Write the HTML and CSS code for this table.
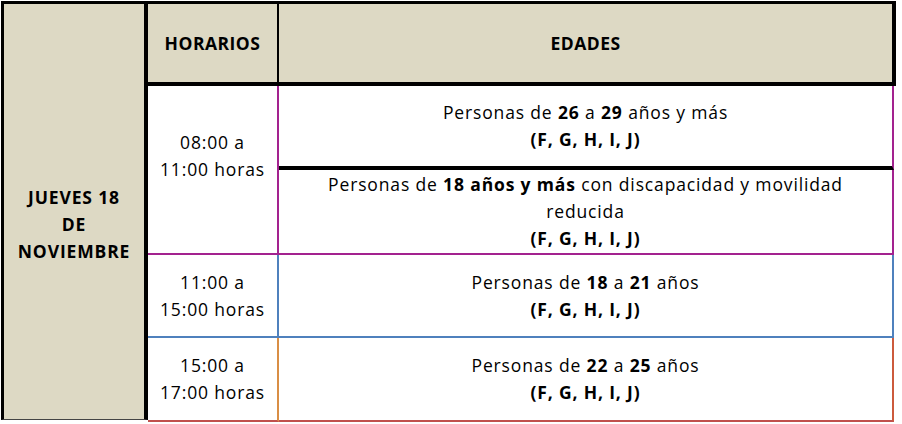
FILE: index.html
```html
<!DOCTYPE html>
<html lang="es">
<head>
<meta charset="utf-8">
<title>Horarios</title>
<link rel="stylesheet" href="styles.css">
</head>
<body>
<div class="sheet">
  <div class="day"><div class="txt"><b>JUEVES 18<br>DE<br>NOVIEMBRE</b></div></div>
  <div class="head h-time"><b>HORARIOS</b></div>
  <div class="head h-age"><b>EDADES</b></div>

  <div class="time t1"><div class="txt pad-up">08:00 a<br>11:00 horas</div></div>
  <div class="age a1"><div class="txt">Personas de <b>26</b> a <b>29</b> años y más<br><b>(F, G, H, I, J)</b></div></div>
  <div class="age a1b"><div class="txt">Personas de <b>18 años y más</b> con discapacidad y movilidad<br>reducida<br><b>(F, G, H, I, J)</b></div></div>

  <div class="time t2"><div class="txt">11:00 a<br>15:00 horas</div></div>
  <div class="age a2"><div class="txt">Personas de <b>18</b> a <b>21</b> años<br><b>(F, G, H, I, J)</b></div></div>

  <div class="time t3"><div class="txt">15:00 a<br>17:00 horas</div></div>
  <div class="age a3"><div class="txt">Personas de <b>22</b> a <b>25</b> años<br><b>(F, G, H, I, J)</b></div></div>
</div>
</body>
</html>
```
FILE: styles.css
```css
html, body {
  margin: 0;
  padding: 0;
  background: #ffffff;
}
body {
  font-family: "Open Sans", Lato, sans-serif;
  font-size: 17.5px;
  letter-spacing: 0.85px;
  color: #000;
}
b { font-weight: 700; }

.sheet {
  margin: 1px 0 0 1px;
  display: grid;
  grid-template-columns: 147px 131px 617px;
  grid-template-rows: 85px 84px 85px 83px 84px;
  width: 895px;
}
.sheet > div {
  box-sizing: border-box;
  display: flex;
  align-items: center;
  justify-content: center;
  text-align: center;
}
.txt { line-height: 27px; }

.day {
  grid-column: 1;
  grid-row: 1 / 6;
  background: #ddd9c4;
  border-left: 3px solid #000;
  border-top: 3px solid #000;
  border-right: 4px solid #000;
  border-bottom: 1px solid #444;
  margin-bottom: 2px;
  padding-top: 26px;
}
.head {
  background: #ddd9c4;
  border-top: 3px solid #000;
  border-bottom: 4px solid #000;
  letter-spacing: 0.5px;
}
.h-time { grid-column: 2; grid-row: 1; border-right: 2px solid #000; }
.h-age { grid-column: 3; grid-row: 1; border-right: 4px solid #000; }

.time { grid-column: 2; }
.age { grid-column: 3; margin-right: 2px; }

.t1 {
  grid-row: 2 / 4;
  border-right: 2px solid #a3228f;
  border-bottom: 2px solid #a3228f;
}
.pad-up { padding-bottom: 28px; }
.a1 {
  grid-row: 2;
  border-right: 2px solid #a3228f;
  border-bottom: 4px solid #000;
}
.a1b {
  grid-row: 3;
  border-right: 2px solid #a3228f;
  border-bottom: 2px solid #a3228f;
}
.t2 {
  grid-row: 4;
  border-right: 2px solid #4f81bd;
  border-bottom: 2px solid #4f81bd;
}
.a2 {
  grid-row: 4;
  border-right: 2px solid #4f81bd;
  border-bottom: 2px solid #4f81bd;
}
.t3 {
  grid-row: 5;
  border-right: 2px solid #d98e45;
  border-bottom: 2px solid #c0504d;
}
.a3 {
  grid-row: 5;
  border-right: 2px solid #cc5a3c;
  border-bottom: 2px solid #c0504d;
}
```
